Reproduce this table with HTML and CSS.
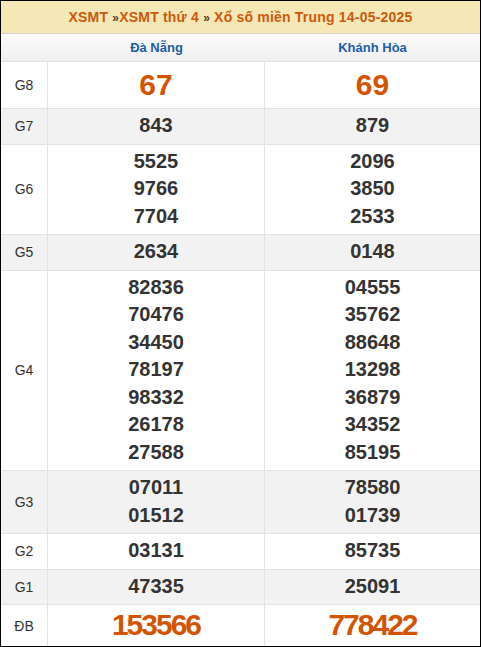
FILE: index.html
```html
<!DOCTYPE html>
<html lang="vi">
<head>
<meta charset="utf-8">
<title>XSMT thứ 4 - Xổ số miền Trung 14-05-2025</title>
<link rel="stylesheet" href="styles.css">
</head>
<body>
<div class="box">
  <h2 class="title"><a class="crumb">XSMT</a> <span class="sep">»</span><a class="crumb">XSMT thứ 4</a> <span class="sep">»</span> <a class="crumb">Xổ số miền Trung 14-05-2025</a></h2>
  <table class="kq">
    <thead>
      <tr class="prov">
        <th class="lbl"></th>
        <th class="c2">Đà Nẵng</th>
        <th class="c3">Khánh Hòa</th>
      </tr>
    </thead>
    <tbody>
      <tr class="g8">
        <td class="lbl">G8</td>
        <td class="c2"><div class="n big">67</div></td>
        <td class="c3"><div class="n big">69</div></td>
      </tr>
      <tr class="alt">
        <td class="lbl">G7</td>
        <td class="c2"><div class="n">843</div></td>
        <td class="c3"><div class="n">879</div></td>
      </tr>
      <tr>
        <td class="lbl">G6</td>
        <td class="c2"><div class="n">5525</div><div class="n">9766</div><div class="n">7704</div></td>
        <td class="c3"><div class="n">2096</div><div class="n">3850</div><div class="n">2533</div></td>
      </tr>
      <tr class="alt">
        <td class="lbl">G5</td>
        <td class="c2"><div class="n">2634</div></td>
        <td class="c3"><div class="n">0148</div></td>
      </tr>
      <tr>
        <td class="lbl">G4</td>
        <td class="c2"><div class="n">82836</div><div class="n">70476</div><div class="n">34450</div><div class="n">78197</div><div class="n">98332</div><div class="n">26178</div><div class="n">27588</div></td>
        <td class="c3"><div class="n">04555</div><div class="n">35762</div><div class="n">88648</div><div class="n">13298</div><div class="n">36879</div><div class="n">34352</div><div class="n">85195</div></td>
      </tr>
      <tr class="alt">
        <td class="lbl">G3</td>
        <td class="c2"><div class="n">07011</div><div class="n">01512</div></td>
        <td class="c3"><div class="n">78580</div><div class="n">01739</div></td>
      </tr>
      <tr>
        <td class="lbl">G2</td>
        <td class="c2"><div class="n">03131</div></td>
        <td class="c3"><div class="n">85735</div></td>
      </tr>
      <tr class="alt">
        <td class="lbl">G1</td>
        <td class="c2"><div class="n">47335</div></td>
        <td class="c3"><div class="n">25091</div></td>
      </tr>
      <tr class="db">
        <td class="lbl">ĐB</td>
        <td class="c2"><div class="n jp">153566</div></td>
        <td class="c3"><div class="n jp">778422</div></td>
      </tr>
    </tbody>
  </table>
</div>
</body>
</html>
```
FILE: styles.css
```css
html, body {
  margin: 0;
  padding: 0;
  background: #fff;
}

body {
  font-family: "Liberation Sans", Arial, sans-serif;
  color: #333;
}

.box {
  width: 481px;
  height: 647px;
  box-sizing: border-box;
  border: 1px solid #000;
  background: #fff;
  overflow: hidden;
}

.title {
  margin: 0;
  height: 32px;
  line-height: 32px;
  background: #f6e7b6;
  border-bottom: 1px solid #d2d2d2;
  text-align: center;
  font-size: 14px;
  font-weight: bold;
  letter-spacing: 0.2px;
  color: #cd5a0c;
}

.crumb {
  color: #cd5a0c;
  text-decoration: none;
}

.sep {
  color: #5a3a1a;
  font-size: 12px;
}

.kq {
  width: 479px;
  border-collapse: separate;
  border-spacing: 0;
  table-layout: fixed;
}

.kq th,
.kq td {
  box-sizing: border-box;
  padding: 0;
  text-align: center;
  vertical-align: middle;
}

.kq .lbl {
  width: 47px;
}

.kq .c2 {
  width: 217px;
}

.kq .c3 {
  width: 215px;
}

.prov th {
  height: 28px;
  font-size: 13px;
  font-weight: bold;
  color: #1c5ea9;
  background: linear-gradient(to bottom, #fcfcfc, #efefef);
  border-bottom: 1px solid #e2e2e2;
}

.kq tbody td {
  border-bottom: 1px solid #e2e2e2;
  padding: 3px 0 4px;
}

.kq tbody td.lbl,
.kq tbody td.c2 {
  border-right: 1px solid #e2e2e2;
}

.kq tbody tr.db td {
  border-bottom: 0;
}

.kq tbody td.lbl {
  font-size: 14px;
  color: #333;
  padding: 0;
}

.alt td {
  background: #f2f2f2;
}

.n {
  font-size: 20px;
  font-weight: bold;
  line-height: 27.5px;
  color: #333;
}

.n.big {
  font-size: 30px;
  line-height: 39px;
  color: #d35400;
}

.n.jp {
  font-size: 30px;
  line-height: 34px;
  letter-spacing: -2px;
  color: #d35400;
}
```
